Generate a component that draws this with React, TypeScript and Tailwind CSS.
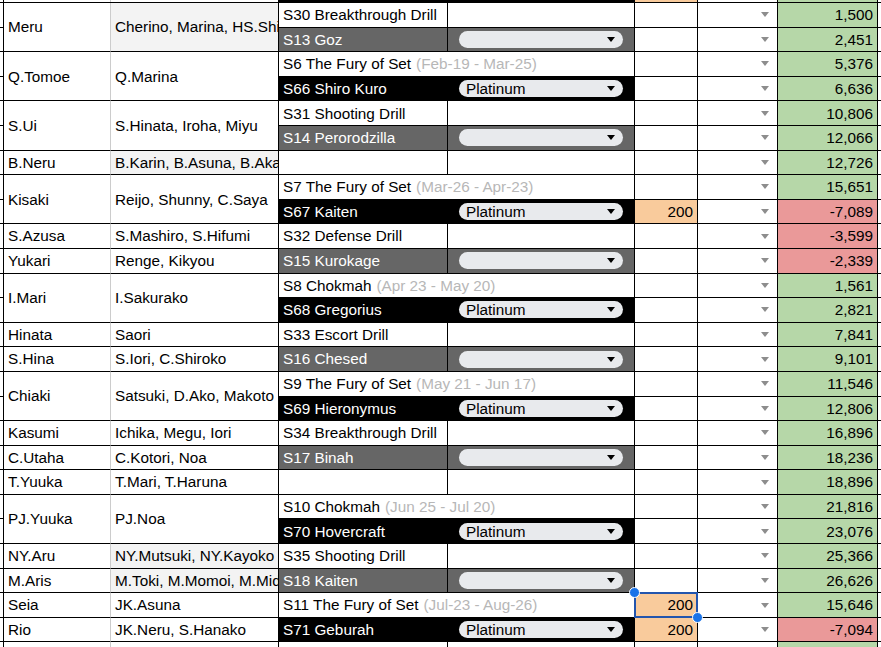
import React from "react";

type Sub = {
	kind: "white" | "date" | "gray" | "black";
	label?: string;
	date?: string;
	e?: string;
	sel?: boolean;
	g: string;
	neg?: boolean;
};

type Group = { a: string; b: string; bGray?: boolean; rows: Sub[] };

const groups: Group[] = [
	{
		a: "Meru",
		b: "Cherino, Marina, HS.Shizuko",
		bGray: true,
		rows: [
			{ kind: "white", label: "S30 Breakthrough Drill", g: "1,500" },
			{ kind: "gray", label: "S13 Goz", g: "2,451" },
		],
	},
	{
		a: "Q.Tomoe",
		b: "Q.Marina",
		rows: [
			{ kind: "date", label: "S6 The Fury of Set", date: "(Feb-19 - Mar-25)", g: "5,376" },
			{ kind: "black", label: "S66 Shiro Kuro", g: "6,636" },
		],
	},
	{
		a: "S.Ui",
		b: "S.Hinata, Iroha, Miyu",
		rows: [
			{ kind: "white", label: "S31 Shooting Drill", g: "10,806" },
			{ kind: "gray", label: "S14 Perorodzilla", g: "12,066" },
		],
	},
	{
		a: "B.Neru",
		b: "B.Karin, B.Asuna, B.Akane",
		bGray: true,
		rows: [{ kind: "white", g: "12,726" }],
	},
	{
		a: "Kisaki",
		b: "Reijo, Shunny, C.Saya",
		rows: [
			{ kind: "date", label: "S7 The Fury of Set", date: "(Mar-26 - Apr-23)", g: "15,651" },
			{ kind: "black", label: "S67 Kaiten", e: "200", g: "-7,089", neg: true },
		],
	},
	{
		a: "S.Azusa",
		b: "S.Mashiro, S.Hifumi",
		rows: [{ kind: "white", label: "S32 Defense Drill", g: "-3,599", neg: true }],
	},
	{
		a: "Yukari",
		b: "Renge, Kikyou",
		rows: [{ kind: "gray", label: "S15 Kurokage", g: "-2,339", neg: true }],
	},
	{
		a: "I.Mari",
		b: "I.Sakurako",
		rows: [
			{ kind: "date", label: "S8 Chokmah", date: "(Apr 23 - May 20)", g: "1,561" },
			{ kind: "black", label: "S68 Gregorius", g: "2,821" },
		],
	},
	{ a: "Hinata", b: "Saori", rows: [{ kind: "white", label: "S33 Escort Drill", g: "7,841" }] },
	{ a: "S.Hina", b: "S.Iori, C.Shiroko", rows: [{ kind: "gray", label: "S16 Chesed", g: "9,101" }] },
	{
		a: "Chiaki",
		b: "Satsuki, D.Ako, Makoto",
		rows: [
			{ kind: "date", label: "S9 The Fury of Set", date: "(May 21 - Jun 17)", g: "11,546" },
			{ kind: "black", label: "S69 Hieronymus", g: "12,806" },
		],
	},
	{
		a: "Kasumi",
		b: "Ichika, Megu, Iori",
		rows: [{ kind: "white", label: "S34 Breakthrough Drill", g: "16,896" }],
	},
	{ a: "C.Utaha", b: "C.Kotori, Noa", rows: [{ kind: "gray", label: "S17 Binah", g: "18,236" }] },
	{ a: "T.Yuuka", b: "T.Mari, T.Haruna", rows: [{ kind: "white", g: "18,896" }] },
	{
		a: "PJ.Yuuka",
		b: "PJ.Noa",
		rows: [
			{ kind: "date", label: "S10 Chokmah", date: "(Jun 25 - Jul 20)", g: "21,816" },
			{ kind: "black", label: "S70 Hovercraft", g: "23,076" },
		],
	},
	{
		a: "NY.Aru",
		b: "NY.Mutsuki, NY.Kayoko",
		bGray: true,
		rows: [{ kind: "white", label: "S35 Shooting Drill", g: "25,366" }],
	},
	{
		a: "M.Aris",
		b: "M.Toki, M.Momoi, M.Midori",
		bGray: true,
		rows: [{ kind: "gray", label: "S18 Kaiten", g: "26,626" }],
	},
	{
		a: "Seia",
		b: "JK.Asuna",
		rows: [
			{
				kind: "date",
				label: "S11 The Fury of Set",
				date: "(Jul-23 - Aug-26)",
				e: "200",
				sel: true,
				g: "15,646",
			},
		],
	},
	{
		a: "Rio",
		b: "JK.Neru, S.Hanako",
		rows: [{ kind: "black", label: "S71 Geburah", e: "200", g: "-7,094", neg: true }],
	},
];

const Caret = ({ color }: { color: string }) => (
	<span
		className={`h-0 w-0 border-x-[4px] border-t-[5px] border-x-transparent ${color}`}
	/>
);

const Chip = ({ value }: { value?: string }) => (
	<div className="flex h-[17px] flex-1 items-center justify-between rounded-full bg-[#e8eaed] pl-[7px] pr-[8px] text-black">
		<span>{value}</span>
		<Caret color="border-t-black" />
	</div>
);

const SubRow = ({ row }: { row: Sub }) => {
	const cd =
		row.kind === "date" ? (
			<div className="flex h-full w-[356px] items-center whitespace-nowrap border-r border-black bg-white pl-[4px]">
				{row.label}
				<span className="ml-[5px] text-[#b7b7b7]">{row.date}</span>
			</div>
		) : (
			<>
				<div
					className={`flex h-full w-[169px] items-center whitespace-nowrap border-r border-black pl-[4px] ${
						row.kind === "gray"
							? "bg-[#666666] text-white"
							: row.kind === "black"
								? "bg-black text-white"
								: "bg-white"
					}`}
				>
					{row.label}
				</div>
				<div
					className={`flex h-full w-[187px] items-center border-r border-black px-[11px] ${
						row.kind === "gray" ? "bg-[#666666]" : row.kind === "black" ? "bg-black" : "bg-white"
					}`}
				>
					{row.kind === "gray" && <Chip />}
					{row.kind === "black" && <Chip value="Platinum" />}
				</div>
			</>
		);

	return (
		<div className="flex h-[24.6px] border-b border-black">
			{cd}
			<div
				className={`relative flex h-full w-[63px] items-center justify-end border-r border-black pr-[4px] ${
					row.e ? "bg-[#f9cb9c]" : "bg-white"
				}`}
			>
				{row.e}
				{row.sel && (
					<>
						<div className="pointer-events-none absolute -inset-px border-2 border-[#2355ad]" />
						<div className="absolute -left-[6px] -top-[6px] z-10 h-[11px] w-[11px] rounded-full border border-white bg-[#1a73e8]" />
						<div className="absolute -bottom-[6px] -right-[6px] z-10 h-[11px] w-[11px] rounded-full border border-white bg-[#1a73e8]" />
					</>
				)}
			</div>
			<div className="flex h-full w-[80px] items-center justify-end border-r border-black bg-white pr-[8px]">
				<Caret color="border-t-[#8d8d8d]" />
			</div>
			<div
				className={`flex h-full w-[100px] items-center justify-end border-r border-black pr-[4px] ${
					row.neg ? "bg-[#ea9999]" : "bg-[#b6d7a8]"
				}`}
			>
				{row.g}
			</div>
			<div className="h-full flex-1 bg-white" />
		</div>
	);
};

const GroupRow = ({ group }: { group: Group }) => (
	<div className="flex">
		<div className="flex w-[4px] flex-col border-r border-black">
			{group.rows.map((_, i) => (
				<div key={i} className="h-[24.6px] border-b border-black" />
			))}
		</div>
		<div className="flex w-[107px] items-center overflow-hidden whitespace-nowrap border-b border-r border-b-black border-r-[#cccccc] pl-[4px]">
			{group.a}
		</div>
		<div
			className={`flex w-[168px] items-center overflow-hidden whitespace-nowrap border-b border-r border-black pl-[4px] ${
				group.bGray ? "bg-[#f3f3f3]" : "bg-white"
			}`}
		>
			{group.b}
		</div>
		<div className="flex flex-1 flex-col">
			{group.rows.map((r, i) => (
				<SubRow key={i} row={r} />
			))}
		</div>
	</div>
);

const EdgeRow = () => (
	<div className="flex h-[3px] border-b border-black">
		<div className="w-[4px] border-r border-black" />
		<div className="w-[107px] border-r border-[#cccccc]" />
		<div className="w-[168px] border-r border-black" />
		<div className="w-[356px] border-r border-black bg-black" />
		<div className="w-[63px] border-r border-black bg-[#f9cb9c]" />
		<div className="w-[80px] border-r border-black" />
		<div className="w-[100px] border-r border-black bg-[#b6d7a8]" />
		<div className="flex-1" />
	</div>
);

const BottomRow = () => (
	<div className="flex h-[10px]">
		<div className="w-[4px] border-r border-black" />
		<div className="w-[107px] border-r border-[#cccccc]" />
		<div className="w-[168px] border-r border-black" />
		<div className="w-[169px] border-r border-black" />
		<div className="w-[187px] border-r border-black" />
		<div className="w-[63px] border-r border-black" />
		<div className="w-[80px] border-r border-black" />
		<div className="w-[100px] border-r border-black bg-[#b6d7a8]" />
		<div className="flex-1" />
	</div>
);

export default function App() {
	return (
		<div className="h-[647px] w-[881px] overflow-hidden bg-white font-['Liberation_Sans',Arial,sans-serif] text-[15.3px] leading-none text-black">
			<EdgeRow />
			{groups.map((g, i) => (
				<GroupRow key={i} group={g} />
			))}
			<BottomRow />
		</div>
	);
}
